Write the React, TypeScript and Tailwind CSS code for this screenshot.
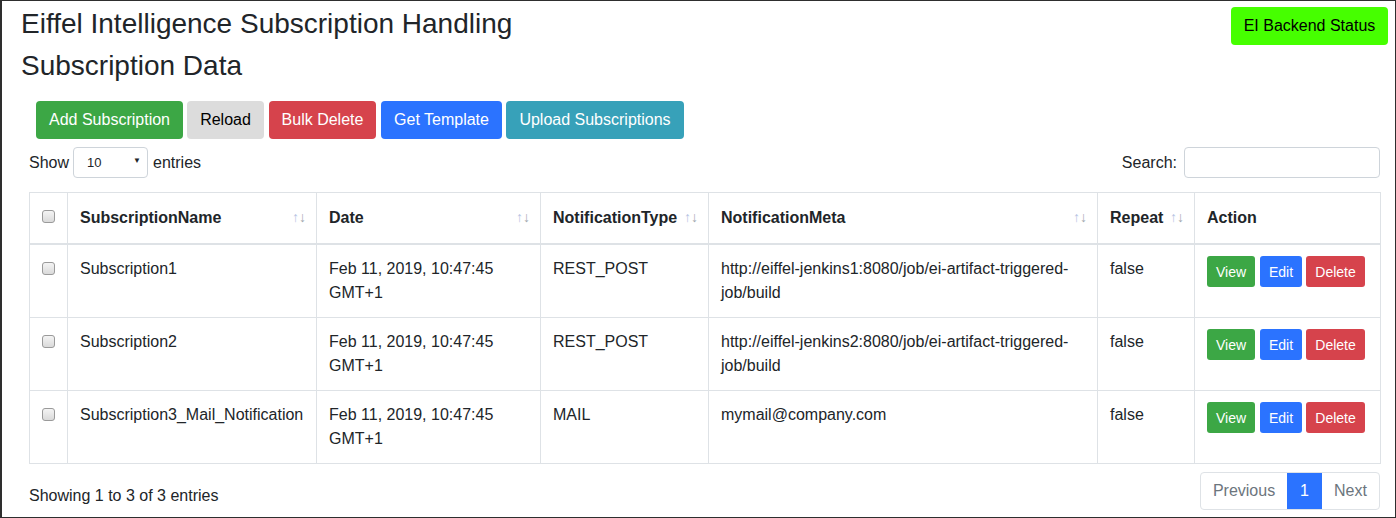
import React from "react";

const rows = [
  {
    name: "Subscription1",
    meta: ["http://eiffel-jenkins1:8080/job/ei-artifact-triggered-", "job/build"],
    type: "REST_POST",
  },
  {
    name: "Subscription2",
    meta: ["http://eiffel-jenkins2:8080/job/ei-artifact-triggered-", "job/build"],
    type: "REST_POST",
  },
  {
    name: "Subscription3_Mail_Notification",
    meta: ["mymail@company.com"],
    type: "MAIL",
  },
];

function Check() {
  return (
    <div className="mx-auto w-[13px] h-[13px] rounded-[3px] border border-[#9a9a9a] bg-gradient-to-b from-[#f4f4f4] to-[#dadada]" />
  );
}

function Sort() {
  return (
    <span className="absolute right-[10px] top-[15px] text-[14px] leading-[18px] select-none tracking-[0px]">
      <span className="text-[#b4c4e2]">↑</span>
      <span className="text-[#a3a8b0]">↓</span>
    </span>
  );
}

export default function App() {
  const th = "relative border border-[#dee2e6] border-b-2 px-[12px] pt-[13px] pb-[13px] text-left font-bold align-bottom leading-[24px]";
  const thCheck = "border border-[#dee2e6] border-b-2 px-0 pt-[17px] pb-[19px] align-top";
  const td = "border border-[#dee2e6] px-[12px] py-[12px] align-top leading-[24px]";
  const tdCheck = "border border-[#dee2e6] px-0 pt-[17px] align-top";
  return (
    <div
      className="h-[518px] w-[1396px] overflow-hidden border border-l-2 border-[#2e2e2e] bg-white text-[#212529] text-[16px] leading-[24px]"
      style={{ fontFamily: '"Liberation Sans", Arial, sans-serif' }}
    >
      <div className="flex justify-between items-start">
        <div className="pl-[19px] pt-[6px]">
          <h3 className="text-[28px] leading-[33.6px] mb-[8px] font-normal">Eiffel Intelligence Subscription Handling</h3>
          <h3 className="text-[28px] leading-[33.6px] font-normal">Subscription Data</h3>
        </div>
        <button className="mt-[6px] mr-[7px] h-[38px] w-[157px] rounded-[4px] bg-[#46ff00] text-black text-[16px] leading-[24px]">
          EI Backend Status
        </button>
      </div>

      <div className="flex items-center ml-[34px] mt-[19px]">
        <button className="h-[38px] w-[147px] rounded-[4px] bg-[#3ca745] text-white">Add Subscription</button>
        <button className="h-[38px] w-[77px] ml-[4px] rounded-[4px] bg-[#dcdcdc] text-black">Reload</button>
        <button className="h-[38px] w-[107px] ml-[5px] rounded-[4px] bg-[#d6434c] text-white">Bulk Delete</button>
        <button className="h-[38px] w-[121px] ml-[5px] rounded-[4px] bg-[#2b73ff] text-white">Get Template</button>
        <button className="h-[38px] w-[178px] ml-[4px] rounded-[4px] bg-[#37a1b9] text-white">Upload Subscriptions</button>
      </div>

      <div className="flex justify-between items-center ml-[27px] mr-[15px] mt-[8px]">
        <div className="flex items-center">
          <span>Show</span>
          <div className="ml-[4px] mr-[5px] relative w-[75px] h-[31px] border border-[#ced4da] rounded-[4px] flex items-center pl-[13px] text-[13px]">
            10
            <span className="absolute right-[6px] top-[8px] text-[8px] leading-[10px]">▼</span>
          </div>
          <span>entries</span>
        </div>
        <div className="flex items-center">
          <span>Search:</span>
          <div className="ml-[7px] w-[196px] h-[31px] border border-[#ced4da] rounded-[4px]" />
        </div>
      </div>

      <table className="ml-[27px] mt-[14px] w-[1351px] table-fixed border-collapse">
        <colgroup>
          <col className="w-[38px]" />
          <col className="w-[249px]" />
          <col className="w-[224px]" />
          <col className="w-[168px]" />
          <col className="w-[389px]" />
          <col className="w-[97px]" />
          <col className="w-[186px]" />
        </colgroup>
        <thead>
          <tr>
            <th className={thCheck}>
              <Check />
            </th>
            <th className={th}>
              SubscriptionName
              <Sort />
            </th>
            <th className={th}>
              Date
              <Sort />
            </th>
            <th className={th}>
              NotificationType
              <Sort />
            </th>
            <th className={th}>
              NotificationMeta
              <Sort />
            </th>
            <th className={th}>
              Repeat
              <Sort />
            </th>
            <th className={th}>Action</th>
          </tr>
        </thead>
        <tbody>
          {rows.map((r) => (
            <tr key={r.name}>
              <td className={tdCheck}>
                <Check />
              </td>
              <td className={td}>{r.name}</td>
              <td className={td}>
                Feb 11, 2019, 10:47:45
                <br />
                GMT+1
              </td>
              <td className={td}>{r.type}</td>
              <td className={td}>
                {r.meta.map((m, i) => (
                  <div key={i}>{m}</div>
                ))}
              </td>
              <td className={td}>false</td>
              <td className="border border-[#dee2e6] pl-[12px] pt-[11px] pb-[13px] align-top leading-[24px]">
                <div className="flex">
                  <button className="h-[31px] w-[48px] rounded-[3px] bg-[#3ca745] text-white text-[14px]">View</button>
                  <button className="h-[31px] w-[42px] ml-[5px] rounded-[3px] bg-[#2b73ff] text-white text-[14px]">Edit</button>
                  <button className="h-[31px] w-[59px] ml-[4px] rounded-[3px] bg-[#d6434c] text-white text-[14px]">Delete</button>
                </div>
              </td>
            </tr>
          ))}
        </tbody>
      </table>

      <div className="flex justify-between items-start ml-[27px] mr-[15px] mt-[8px]">
        <div className="pt-[12px]">Showing 1 to 3 of 3 entries</div>
        <div className="flex h-[38px] border border-[#dee2e6] rounded-[4px] overflow-hidden">
          <span className="w-[86px] text-center py-[6px] text-[#6c757d] leading-[24px]">Previous</span>
          <span className="w-[35px] text-center py-[6px] bg-[#2b73ff] text-white leading-[24px]">1</span>
          <span className="w-[57px] text-center py-[6px] text-[#6c757d] leading-[24px]">Next</span>
        </div>
      </div>
    </div>
  );
}
